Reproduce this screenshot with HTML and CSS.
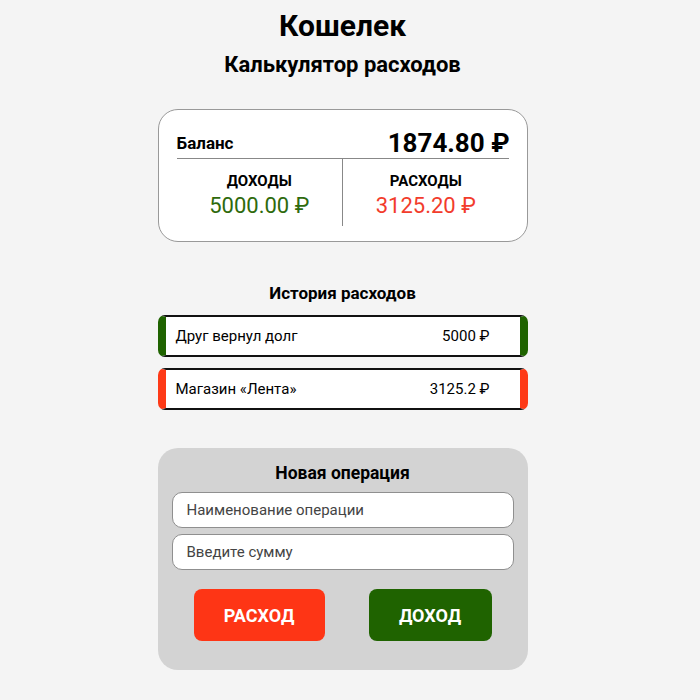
FILE: index.html
```html
<!DOCTYPE html>
<html lang="ru">
  <head>
    <meta charset="UTF-8" />
    <meta name="viewport" content="width=device-width, initial-scale=1.0" />
    <title>Кошелек</title>
    <link rel="stylesheet" href="styles.css">
  </head>
  <body>
    <h1 class="title">Кошелек</h1>
    <h2 class="subtitle">Калькулятор расходов</h2>

    <div class="balance-card">
      <div class="balance-row">
        <span class="balance-label">Баланс</span>
        <span class="balance-value">1874.80 ₽</span>
      </div>
      <div class="totals">
        <div class="total">
          <div class="total-label">ДОХОДЫ</div>
          <div class="total-value income">5000.00 ₽</div>
        </div>
        <div class="total">
          <div class="total-label">РАСХОДЫ</div>
          <div class="total-value expense">3125.20 ₽</div>
        </div>
      </div>
    </div>

    <h3 class="section-title">История расходов</h3>
    <ul class="history">
      <li class="history-item plus">
        <span>Друг вернул долг</span>
        <span>5000 ₽</span>
      </li>
      <li class="history-item minus">
        <span>Магазин «Лента»</span>
        <span>3125.2 ₽</span>
      </li>
    </ul>

    <form class="new-op">
      <h3 class="new-op-title">Новая операция</h3>
      <input class="field" type="text" placeholder="Наименование операции" />
      <input class="field" type="text" placeholder="Введите сумму" />
      <div class="buttons">
        <button type="button" class="btn btn-expense">РАСХОД</button>
        <button type="button" class="btn btn-income">ДОХОД</button>
      </div>
    </form>
  </body>
</html>
```

FILE: styles.css
```css
body {
  margin: 0;
  padding: 8px 15px 30px 0;
  display: flex;
  flex-direction: column;
  align-items: center;
  background: #f4f4f4;
  color: #000;
  font-family: Roboto, "Liberation Sans", sans-serif;
}
.title {
  margin: 0;
  font-size: 30px;
  line-height: 36px;
  font-weight: 700;
}
.subtitle {
  margin: 8px 0 0;
  font-size: 22px;
  line-height: 26px;
  font-weight: 700;
}
.balance-card {
  box-sizing: border-box;
  width: 370px;
  margin-top: 31px;
  padding: 18px 18px 15px;
  background: #fff;
  border: 1px solid #999;
  border-radius: 20px;
}
.balance-row {
  display: flex;
  justify-content: space-between;
  align-items: center;
  border-bottom: 1px solid #888;
}
.balance-label {
  font-size: 17px;
  font-weight: 700;
}
.balance-value {
  font-size: 26px;
  font-weight: 700;
  line-height: 30px;
  margin-right: -1px;
}
.totals {
  display: flex;
}
.total {
  flex: 1;
  text-align: center;
  padding: 14px 0 6px;
}
.total + .total {
  border-left: 1px solid #888;
}
.total-label {
  font-size: 15px;
  font-weight: 700;
  line-height: 16px;
}
.total-value {
  font-size: 22px;
  line-height: 28px;
  margin-top: 3px;
}
.income {
  color: #2e6a0c;
}
.expense {
  color: #f23c2c;
}
.section-title {
  margin: 40px 0 0;
  font-size: 17px;
  line-height: 22px;
  font-weight: 700;
}
.history {
  list-style: none;
  margin: 11px 0 0;
  padding: 0;
  width: 370px;
}
.history-item {
  box-sizing: border-box;
  display: flex;
  justify-content: space-between;
  align-items: center;
  height: 42px;
  margin-bottom: 11px;
  padding: 0 30px 0 10px;
  background: #fff;
  border: 2px solid #111;
  border-radius: 7px;
  font-size: 15px;
}
.history-item.plus {
  border-left: 8px solid #1f6300;
  border-right: 8px solid #1f6300;
}
.history-item.minus {
  border-left: 8px solid #fe3a17;
  border-right: 8px solid #fe3a17;
}
.new-op {
  box-sizing: border-box;
  width: 370px;
  margin-top: 27px;
  padding: 14px 14px 29px;
  background: #d3d3d3;
  border-radius: 20px;
  display: flex;
  flex-direction: column;
  gap: 6px;
}
.new-op-title {
  margin: 0 0 2px;
  text-align: center;
  font-size: 17.5px;
  line-height: 22px;
  font-weight: 700;
}
.field {
  box-sizing: border-box;
  height: 36px;
  padding: 0 14px;
  border: 1px solid #8f8f8f;
  border-radius: 10px;
  background: #fff;
  font-family: inherit;
  font-size: 15px;
}
.field::placeholder {
  color: #444;
}
.buttons {
  display: flex;
  justify-content: space-between;
  margin-top: 13px;
  padding: 0 22px;
}
.btn {
  height: 52px;
  border: none;
  border-radius: 8px;
  color: #fff;
  font-family: inherit;
  font-size: 18px;
  font-weight: 700;
  cursor: pointer;
}
.btn-expense {
  width: 131px;
  background: #fe3515;
}
.btn-income {
  width: 123px;
  background: #1f6300;
}
```
